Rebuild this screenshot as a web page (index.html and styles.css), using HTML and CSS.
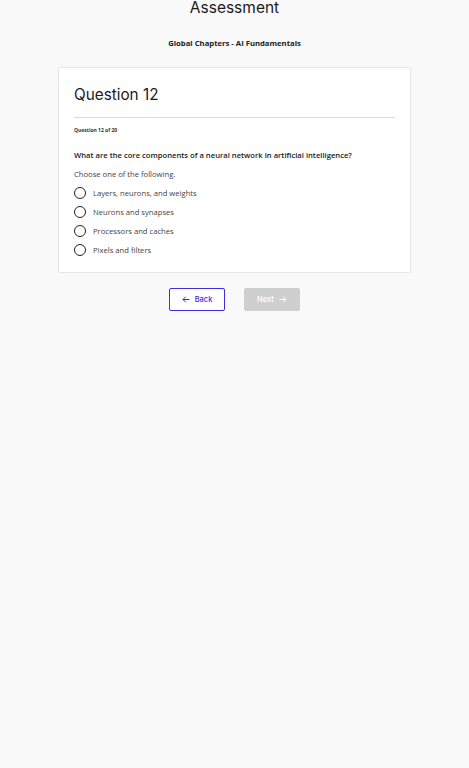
FILE: index.html
```html
<!DOCTYPE html>
<html lang="en">
<head>
<meta charset="utf-8">
<title>Assessment</title>
<link rel="stylesheet" href="styles.css">
</head>
<body>
<main class="page">
  <h1 class="title">Assessment</h1>
  <p class="course">Global Chapters - AI Fundamentals</p>
  <section class="card">
    <h2 class="q-title">Question 12</h2>
    <hr class="divider">
    <p class="q-count">Question 12 of 20</p>
    <p class="q-text">What are the core components of a neural network in artificial intelligence?</p>
    <p class="q-hint">Choose one of the following.</p>
    <ul class="options">
      <li class="option"><span class="radio"></span>Layers, neurons, and weights</li>
      <li class="option"><span class="radio"></span>Neurons and synapses</li>
      <li class="option"><span class="radio"></span>Processors and caches</li>
      <li class="option"><span class="radio"></span>Pixels and filters</li>
    </ul>
  </section>
  <div class="nav">
    <button class="btn btn-back"><svg width="8" height="7" viewBox="0 0 8 7"><path d="M7.5 3.5H1M3.8 0.7L1 3.5l2.8 2.8" fill="none" stroke="currentColor" stroke-width="1"/></svg>Back</button>
    <button class="btn btn-next" disabled>Next<svg width="8" height="7" viewBox="0 0 8 7"><path d="M0.5 3.5H7M4.2 0.7L7 3.5 4.2 6.3" fill="none" stroke="currentColor" stroke-width="1"/></svg></button>
  </div>
</main>
</body>
</html>
```
FILE: styles.css
```css
* { box-sizing: border-box; }
html, body { margin: 0; padding: 0; }
body {
  background: #f9f9f9;
  font-family: "Open Sans", sans-serif;
  color: #1a1a1a;
}
.page {
  display: flex;
  flex-direction: column;
  align-items: center;
  padding-top: 0;
}
.title {
  margin: 0;
  font-family: Inter, "Liberation Sans", sans-serif;
  font-weight: 400;
  font-size: 15.5px;
  line-height: 16px;
  color: #1a1a1a;
}
.course {
  margin: 21px 0 0;
  font-family: "Open Sans", sans-serif;
  font-weight: 700;
  font-size: 7.7px;
  line-height: 12px;
  color: #222;
}
.card {
  margin-top: 18px;
  width: 353px;
  background: #fff;
  border: 1px solid #e6e6e6;
  border-radius: 2px;
  padding: 17px 15px 16px;
}
.q-title {
  margin: 0;
  font-family: Inter, "Liberation Sans", sans-serif;
  font-weight: 400;
  font-size: 15.3px;
  line-height: 20px;
  color: #1a1a1a;
}
.divider {
  margin: 12px 0 0;
  border: 0;
  border-top: 1px solid #d9d9d9;
  height: 0;
}
.q-count {
  margin: 8px 0 0;
  font-size: 5px;
  font-weight: 700;
  line-height: 8px;
  color: #333;
}
.q-text {
  margin: 15px 0 0;
  font-size: 7.65px;
  font-weight: 600;
  line-height: 12px;
  color: #1a1a1a;
}
.q-hint {
  margin: 7px 0 0;
  font-size: 7.65px;
  line-height: 12px;
  color: #444;
}
.options {
  list-style: none;
  margin: 7px 0 0;
  padding: 0;
  display: flex;
  flex-direction: column;
  gap: 7px;
}
.option {
  display: flex;
  align-items: center;
  gap: 7px;
  font-size: 7.65px;
  line-height: 12px;
  color: #444;
}
.radio {
  width: 12px;
  height: 12px;
  border: 1px solid #222;
  border-radius: 50%;
  flex: none;
}
.nav {
  margin-top: 15px;
  display: flex;
  gap: 19px;
}
.btn {
  width: 56px;
  height: 23px;
  border-radius: 2px;
  font-family: Inter, "Liberation Sans", sans-serif;
  font-size: 7.5px;
  font-weight: 500;
  display: flex;
  align-items: center;
  justify-content: center;
  gap: 5px;
  padding: 0;
}
.btn-back {
  background: #fff;
  border: 1px solid #3c2ee0;
  color: #3c2ee0;
}
.btn-next {
  background: #cfcfcf;
  border: 1px solid #cfcfcf;
  color: #fff;
}
```
